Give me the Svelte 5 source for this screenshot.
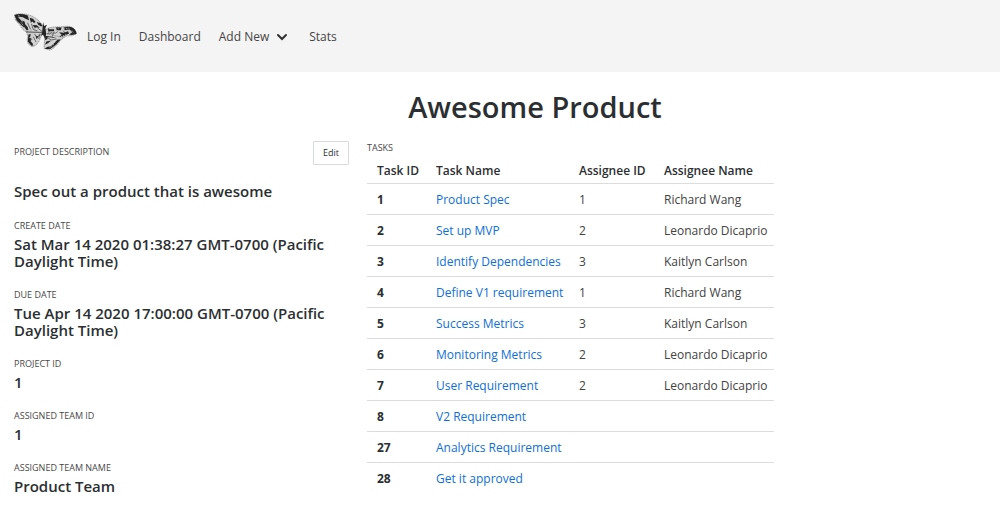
<script>
  const details = [
    ['Create date', 'Sat Mar 14 2020 01:38:27 GMT-0700 (Pacific Daylight Time)'],
    ['Due date', 'Tue Apr 14 2020 17:00:00 GMT-0700 (Pacific Daylight Time)'],
    ['Project ID', '1'],
    ['Assigned team ID', '1'],
    ['Assigned team name', 'Product Team']
  ];
  const tasks = [
    [1, 'Product Spec', 1, 'Richard Wang'],
    [2, 'Set up MVP', 2, 'Leonardo Dicaprio'],
    [3, 'Identify Dependencies', 3, 'Kaitlyn Carlson'],
    [4, 'Define V1 requirement', 1, 'Richard Wang'],
    [5, 'Success Metrics', 3, 'Kaitlyn Carlson'],
    [6, 'Monitoring Metrics', 2, 'Leonardo Dicaprio'],
    [7, 'User Requirement', 2, 'Leonardo Dicaprio'],
    [8, 'V2 Requirement', '', ''],
    [27, 'Analytics Requirement', '', ''],
    [28, 'Get it approved', '', '']
  ];
</script>

<header>
  <a class="logo" href="#home" aria-label="Home">
    <svg viewBox="39 38 195 117" aria-hidden="true">
      <g fill="#d0d0d0" stroke="#484848" stroke-width="1.5" stroke-dasharray="4 2">
        <path d="M41 44Q53 38 78 42Q103 48 117 63L132 80L131 100Q104 104 82 97Q67 94 60 78Q51 68 44 60Z" />
        <path d="M78 97L128 98L118 122Q107 143 94 141Q82 136 80 121L82 110Z" />
        <path d="M137 88Q155 79 181 81Q210 75 223 85L232 101Q219 110 204 108L188 116L151 121L135 108Z" />
        <path d="M135 102L192 113L176 131Q160 150 149 152L132 147Z" />
      </g>
      <g fill="#252525">
        <path d="M41 44Q59 38 82 46L86 60L75 56Q65 48 52 50L65 65L75 80L70 83L48 62Z" />
        <path d="M65 61L72 64L74 73L82 82L84 90L78 91L70 79ZM88 53L98 56L106 66L101 69L96 64L91 68ZM110 66L121 69L128 79L122 79L114 74ZM97 75L110 76L119 84L109 82L104 86Z" />
        <path d="M143 88L163 88L163 94L146 94ZM169 82L186 83L184 91L171 91ZM192 83Q221 74 231 96L232 103L217 106L209 104L219 97L211 89L195 91ZM178 97L193 99L206 94L209 101L194 109L179 113L186 105Z" />
        <path d="M136 108L160 112L171 116L143 112L142 119L135 121ZM184 119L169 136L151 149L134 149L141 143L153 140L167 127L171 120Z" />
        <path d="M139 126L154 123L145 130L135 136Z" />
        <path d="M84 104L91 103L89 114L96 119L90 124L96 130L99 138L93 139L82 126ZM106 108L115 110L109 119Z" />
        <path d="M128 79L129 66L132 78L141 74L136 85L139 102L135 117L129 105L123 108L126 97Z" />
      </g>
      <g fill="none" stroke="#303030" stroke-width="2">
        <path d="M77 96L128 98M93 71L99 89L112 93M81 68L92 92M102 102L110 112L123 104M112 84L127 96M141 101L168 100L174 95M141 113L154 121L171 118M146 84L148 104M163 96L157 111M99 111L107 127M118 102L116 118M191 92L199 104M153 96L157 104" />
      </g>
      <path d="M52 47L58 46M68 53L77 64M61 67L70 79M83 86L102 94M88 62L92 80M106 59L115 67M87 112L98 127L106 119M103 82L117 92M139 105L161 107M140 98L170 104M174 84L179 89M193 87L210 85M184 111L201 104M139 141L153 134L172 121M149 145L164 133M218 92L223 99" fill="none" stroke="#e5e5e5" stroke-width="2" stroke-dasharray="4 3" />
    </svg>
  </a>
  <nav aria-label="Main">
    <a href="#login">Log In</a>
    <a href="#dashboard">Dashboard</a>
    <button class="add" type="button">Add New
      <svg viewBox="0 0 12 8" aria-hidden="true"><path d="M2 2L6 6L10 2" fill="none" stroke="currentColor" stroke-width="2" stroke-linecap="round" /></svg>
    </button>
    <a href="#stats">Stats</a>
  </nav>
</header>

<main>
  <h1>Awesome Product</h1>
  <div class="columns">
    <section class="project">
      <div class="top">
        <h2>Project description</h2>
        <button class="edit" type="button">Edit</button>
      </div>
      <p class="description">Spec out a product that is awesome</p>
      <dl>
        {#each details as [label, value]}
          <div><dt>{label}</dt><dd>{value}</dd></div>
        {/each}
      </dl>
    </section>
    <section class="tasks">
      <h2 id="tasks-title">Tasks</h2>
      <table aria-labelledby="tasks-title">
        <colgroup><col class="id" /><col class="name" /><col class="aid" /><col class="aname" /></colgroup>
        <thead>
          <tr><th scope="col">Task ID</th><th scope="col">Task Name</th><th scope="col">Assignee ID</th><th scope="col">Assignee Name</th></tr>
        </thead>
        <tbody>
          {#each tasks as [id, name, assigneeId, assignee]}
            <tr><th scope="row">{id}</th><td><a href="#task-{id}">{name}</a></td><td>{assigneeId}</td><td>{assignee}</td></tr>
          {/each}
        </tbody>
      </table>
    </section>
  </div>
</main>

<style>
  :global(body) {
    margin: 0;
    background: #fff;
    color: #2b2f31;
    font: 12px/18px "Open Sans", "Noto Sans", sans-serif;
  }
  header {
    display: flex;
    align-items: flex-start;
    gap: 9px;
    padding: 13px 13px 21px;
    background: #f4f4f4;
  }
  .logo svg { display: block; width: 65px; height: 38px; }
  nav { display: flex; gap: 18px; padding-top: 15px; }
  nav a, .add { color: #454545; text-decoration: none; }
  button { font: inherit; cursor: pointer; }
  .add {
    display: flex;
    align-items: center;
    gap: 7px;
    padding: 0;
    border: 0;
    background: none;
  }
  .add svg { width: 12px; height: 8px; color: #303030; margin-right: 3px; }
  h1, h2, p, dl, dd { margin: 0; }
  h1 {
    padding: 15px 0 14px 70px;
    font-size: 29px;
    line-height: 40px;
    font-weight: 600;
    text-align: center;
  }
  .columns {
    display: grid;
    grid-template-columns: minmax(0, 335fr) minmax(0, 619fr);
    gap: 18px;
    padding: 0 14px 20px;
  }
  .top { display: flex; justify-content: space-between; align-items: center; }
  h2, dt {
    padding: 1px 0 4px;
    color: #484848;
    font-size: 9px;
    line-height: 12px;
    font-weight: 400;
    text-transform: uppercase;
  }
  .edit {
    height: 24px;
    padding: 0 9px;
    border: 1px solid #d9dadb;
    border-radius: 1px;
    background: #fff;
    color: #303030;
    font-size: 9px;
  }
  .description, dd { font-size: 15px; line-height: 17px; font-weight: 600; }
  .description { padding: 18px 0 19px; }
  dl { display: grid; gap: 18px; }
  table { width: 407px; max-width: 100%; table-layout: fixed; border-collapse: collapse; }
  .id { width: 59px; }
  .name { width: 143px; }
  .aid { width: 85px; }
  th, td { padding: 7px 0 5px 10px; text-align: left; white-space: nowrap; }
  thead th { padding: 4px 0 3px 10px; font-weight: 600; }
  tbody th { font-weight: 700; }
  tbody tr { border-top: 1px solid #dcdcdc; }
  td { color: #424242; }
  td a { color: #1070d4; text-decoration: none; }
</style>
